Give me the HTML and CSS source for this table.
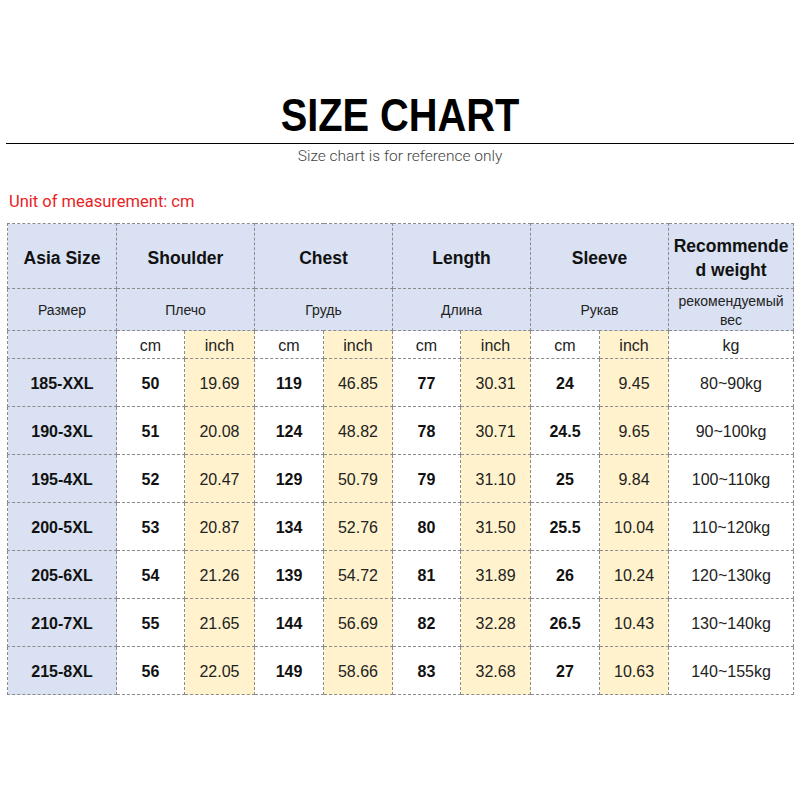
FILE: index.html
```html
<!DOCTYPE html>
<html lang="en">
<head>
<meta charset="utf-8">
<title>Size Chart</title>
<link rel="stylesheet" href="styles.css">
</head>
<body>
<div class="page">
  <header class="head">
    <h1 class="title"><span class="title-text">SIZE CHART</span></h1>
    <p class="subtitle">Size chart is for reference only</p>
  </header>
  <p class="unit">Unit of measurement: cm</p>
  <table class="chart">
    <colgroup>
      <col class="c-size"><col class="c-68"><col class="c-70"><col class="c-69"><col class="c-69"><col class="c-68"><col class="c-70"><col class="c-69"><col class="c-69"><col class="c-kg">
    </colgroup>
    <tr class="r-head">
      <td class="blue">Asia Size</td>
      <td class="blue" colspan="2">Shoulder</td>
      <td class="blue" colspan="2">Chest</td>
      <td class="blue" colspan="2">Length</td>
      <td class="blue" colspan="2">Sleeve</td>
      <td class="blue wrap">Recommended weight</td>
    </tr>
    <tr class="r-ru">
      <td class="blue">Размер</td>
      <td class="blue" colspan="2">Плечо</td>
      <td class="blue" colspan="2">Грудь</td>
      <td class="blue" colspan="2">Длина</td>
      <td class="blue" colspan="2">Рукав</td>
      <td class="blue">рекомендуемый вес</td>
    </tr>
    <tr class="r-unit">
      <td class="blue"></td>
      <td>cm</td><td class="yel">inch</td>
      <td>cm</td><td class="yel">inch</td>
      <td>cm</td><td class="yel">inch</td>
      <td>cm</td><td class="yel">inch</td>
      <td>kg</td>
    </tr>
    <tr class="r-data">
      <td class="blue size">185-XXL</td>
      <td class="b">50</td><td class="yel">19.69</td>
      <td class="b">119</td><td class="yel">46.85</td>
      <td class="b">77</td><td class="yel">30.31</td>
      <td class="b">24</td><td class="yel">9.45</td>
      <td>80~90kg</td>
    </tr>
    <tr class="r-data">
      <td class="blue size">190-3XL</td>
      <td class="b">51</td><td class="yel">20.08</td>
      <td class="b">124</td><td class="yel">48.82</td>
      <td class="b">78</td><td class="yel">30.71</td>
      <td class="b">24.5</td><td class="yel">9.65</td>
      <td>90~100kg</td>
    </tr>
    <tr class="r-data">
      <td class="blue size">195-4XL</td>
      <td class="b">52</td><td class="yel">20.47</td>
      <td class="b">129</td><td class="yel">50.79</td>
      <td class="b">79</td><td class="yel">31.10</td>
      <td class="b">25</td><td class="yel">9.84</td>
      <td>100~110kg</td>
    </tr>
    <tr class="r-data">
      <td class="blue size">200-5XL</td>
      <td class="b">53</td><td class="yel">20.87</td>
      <td class="b">134</td><td class="yel">52.76</td>
      <td class="b">80</td><td class="yel">31.50</td>
      <td class="b">25.5</td><td class="yel">10.04</td>
      <td>110~120kg</td>
    </tr>
    <tr class="r-data">
      <td class="blue size">205-6XL</td>
      <td class="b">54</td><td class="yel">21.26</td>
      <td class="b">139</td><td class="yel">54.72</td>
      <td class="b">81</td><td class="yel">31.89</td>
      <td class="b">26</td><td class="yel">10.24</td>
      <td>120~130kg</td>
    </tr>
    <tr class="r-data">
      <td class="blue size">210-7XL</td>
      <td class="b">55</td><td class="yel">21.65</td>
      <td class="b">144</td><td class="yel">56.69</td>
      <td class="b">82</td><td class="yel">32.28</td>
      <td class="b">26.5</td><td class="yel">10.43</td>
      <td>130~140kg</td>
    </tr>
    <tr class="r-data">
      <td class="blue size">215-8XL</td>
      <td class="b">56</td><td class="yel">22.05</td>
      <td class="b">149</td><td class="yel">58.66</td>
      <td class="b">83</td><td class="yel">32.68</td>
      <td class="b">27</td><td class="yel">10.63</td>
      <td>140~155kg</td>
    </tr>
  </table>
</div>
</body>
</html>
```

FILE: styles.css
```css
* { box-sizing: border-box; }
html, body { margin: 0; padding: 0; background: #fff; }
body { font-family: "Liberation Sans", Arial, sans-serif; color: #111; }
.page { width: 800px; height: 800px; padding: 0 7px 0 7px; }

.head { padding-top: 92px; text-align: center; }
.title {
  margin: 0 -1px;
  font-family: "Liberation Sans", Arial, sans-serif;
  font-weight: 700;
  font-size: 46px;
  line-height: 46px;
  color: #000;
  padding-bottom: 5px;
  border-bottom: 1px solid #000;
}
.title-text {
  display: inline-block;
  transform: scaleX(0.865);
  transform-origin: center;
}
.subtitle {
  margin: 3px 0 0;
  font-family: Roboto, "Liberation Sans", sans-serif;
  font-weight: 300;
  font-size: 15.5px;
  line-height: 18px;
  color: #444;
}
.unit {
  margin: 27px 0 0 2px;
  font-family: Roboto, "Liberation Sans", sans-serif;
  font-weight: 400;
  font-size: 16.5px;
  line-height: 20px;
  color: #e8231f;
}

.chart {
  margin-top: 11px;
  width: 786px;
  table-layout: fixed;
  border-collapse: collapse;
}
.c-size { width: 109px; }
.c-68 { width: 68px; }
.c-69 { width: 69px; }
.c-70 { width: 70px; }
.c-kg { width: 125px; }

.chart td {
  border: 1px dashed #8c8c8c;
  text-align: center;
  vertical-align: middle;
  padding: 0 3px;
  font-size: 16px;
  color: #222;
}
.blue { background: #d9e1f2; }
.yel { background: #fff2cc; color: #333; }

.r-head td { height: 65px; padding-top: 3px; font-size: 17.5px; font-weight: 700; line-height: 24px; color: #111; }
.r-head .wrap { word-break: break-all; }
.r-ru td { height: 42px; padding-top: 2px; font-size: 14px; line-height: 19px; color: #222; }
.r-unit td { height: 28px; padding-top: 3px; font-size: 16px; color: #222; }
.r-data td { height: 48px; padding-top: 2px; }
.r-data .b, .r-data .size { font-weight: 700; color: #111; }
```
